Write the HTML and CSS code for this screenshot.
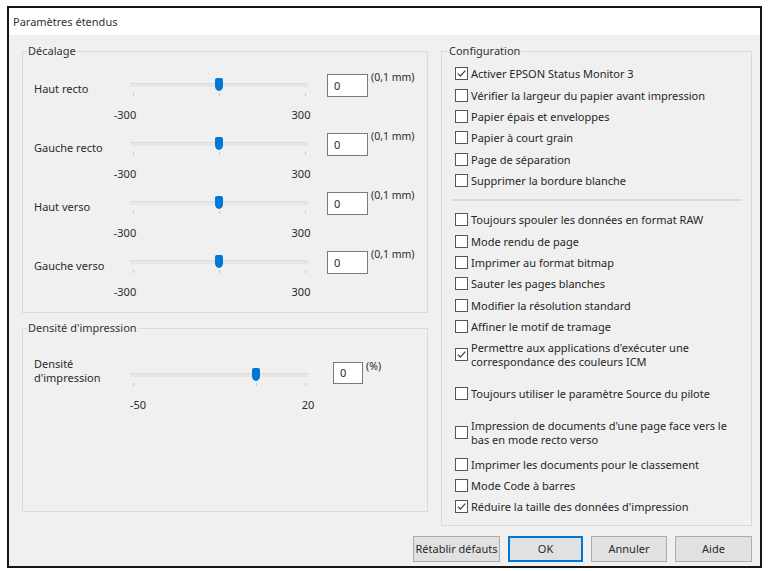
FILE: index.html
```html
<!DOCTYPE html>
<html lang="fr">
<head>
<meta charset="utf-8">
<title>Paramètres étendus</title>
<link rel="stylesheet" href="styles.css">
</head>
<body>
<div class="window">
  <div class="titlebar">Paramètres étendus</div>
  <div class="body">
    <div class="main">
      <div class="col-left">
        <fieldset class="group g-offset">
          <legend>Décalage</legend>
          <div class="rows">
            <div class="row">
              <div class="lbl">Haut recto</div>
              <div class="slider">
                <div class="rail"><span class="tick" style="--p:0"></span><span class="tick" style="--p:0.5"></span><span class="tick" style="--p:1"></span><span class="thumb" style="--p:0.5"></span></div>
                <div class="scale scale-offset"><span>-300</span><span>300</span></div>
              </div>
              <div class="val">0</div>
              <div class="unit">(0,1 mm)</div>
            </div>
            <div class="row">
              <div class="lbl">Gauche recto</div>
              <div class="slider">
                <div class="rail"><span class="tick" style="--p:0"></span><span class="tick" style="--p:0.5"></span><span class="tick" style="--p:1"></span><span class="thumb" style="--p:0.5"></span></div>
                <div class="scale scale-offset"><span>-300</span><span>300</span></div>
              </div>
              <div class="val">0</div>
              <div class="unit">(0,1 mm)</div>
            </div>
            <div class="row">
              <div class="lbl">Haut verso</div>
              <div class="slider">
                <div class="rail"><span class="tick" style="--p:0"></span><span class="tick" style="--p:0.5"></span><span class="tick" style="--p:1"></span><span class="thumb" style="--p:0.5"></span></div>
                <div class="scale scale-offset"><span>-300</span><span>300</span></div>
              </div>
              <div class="val">0</div>
              <div class="unit">(0,1 mm)</div>
            </div>
            <div class="row">
              <div class="lbl">Gauche verso</div>
              <div class="slider">
                <div class="rail"><span class="tick" style="--p:0"></span><span class="tick" style="--p:0.5"></span><span class="tick" style="--p:1"></span><span class="thumb" style="--p:0.5"></span></div>
                <div class="scale scale-offset"><span>-300</span><span>300</span></div>
              </div>
              <div class="val">0</div>
              <div class="unit">(0,1 mm)</div>
            </div>
          </div>
        </fieldset>
        <fieldset class="group g-density">
          <legend>Densité d'impression</legend>
          <div class="row row-density">
            <div class="lbl lbl-two">Densité<br>d'impression</div>
            <div class="slider">
              <div class="rail"><span class="tick" style="--p:0"></span><span class="tick" style="--p:0.7143"></span><span class="tick" style="--p:1"></span><span class="thumb" style="--p:0.7143"></span></div>
              <div class="scale scale-density"><span>-50</span><span>20</span></div>
            </div>
            <div class="val val-small">0</div>
            <div class="unit">(%)</div>
          </div>
        </fieldset>
      </div>
      <fieldset class="group g-config">
        <legend>Configuration</legend>
        <div class="cb on"><span class="box"><svg viewBox="0 0 11 11" width="11" height="11"><path d="M1.8 5.6 L4.3 8.1 L9.3 2.6" /></svg></span><span class="txt">Activer EPSON Status Monitor 3</span></div>
        <div class="cb"><span class="box"></span><span class="txt">Vérifier la largeur du papier avant impression</span></div>
        <div class="cb"><span class="box"></span><span class="txt">Papier épais et enveloppes</span></div>
        <div class="cb"><span class="box"></span><span class="txt">Papier à court grain</span></div>
        <div class="cb"><span class="box"></span><span class="txt">Page de séparation</span></div>
        <div class="cb"><span class="box"></span><span class="txt">Supprimer la bordure blanche</span></div>
        <div class="sep"></div>
        <div class="cb"><span class="box"></span><span class="txt">Toujours spouler les données en format RAW</span></div>
        <div class="cb"><span class="box"></span><span class="txt">Mode rendu de page</span></div>
        <div class="cb"><span class="box"></span><span class="txt">Imprimer au format bitmap</span></div>
        <div class="cb"><span class="box"></span><span class="txt">Sauter les pages blanches</span></div>
        <div class="cb"><span class="box"></span><span class="txt">Modifier la résolution standard</span></div>
        <div class="cb"><span class="box"></span><span class="txt">Affiner le motif de tramage</span></div>
        <div class="cb on multi m-permit"><span class="box"><svg viewBox="0 0 11 11" width="11" height="11"><path d="M1.8 5.6 L4.3 8.1 L9.3 2.6" /></svg></span><span class="txt">Permettre aux applications d'exécuter une<br>correspondance des couleurs ICM</span></div>
        <div class="cb m-source"><span class="box"></span><span class="txt">Toujours utiliser le paramètre Source du pilote</span></div>
        <div class="cb multi m-face"><span class="box"></span><span class="txt">Impression de documents d'une page face vers le<br>bas en mode recto verso</span></div>
        <div class="cb m-sort"><span class="box"></span><span class="txt">Imprimer les documents pour le classement</span></div>
        <div class="cb"><span class="box"></span><span class="txt">Mode Code à barres</span></div>
        <div class="cb on"><span class="box"><svg viewBox="0 0 11 11" width="11" height="11"><path d="M1.8 5.6 L4.3 8.1 L9.3 2.6" /></svg></span><span class="txt">Réduire la taille des données d'impression</span></div>
      </fieldset>
    </div>
    <div class="buttons">
      <button class="btn btn-wide">Rétablir défauts</button>
      <button class="btn btn-ok">OK</button>
      <button class="btn btn-cancel">Annuler</button>
      <button class="btn btn-help">Aide</button>
    </div>
  </div>
</div>
</body>
</html>
```

FILE: styles.css
```css
* { box-sizing: border-box; }

html, body {
  margin: 0;
  padding: 0;
  background: #ffffff;
}

body {
  font-family: "Noto Sans", "Open Sans", sans-serif;
  font-size: 11px;
  color: #2b2b2b;
}

.window {
  margin: 6px 0 0 7px;
  width: 755px;
  height: 562px;
  border: 2px solid #161616;
  background: #f0f0f0;
  display: flex;
  flex-direction: column;
}

.titlebar {
  height: 27px;
  flex: none;
  background: #ffffff;
  display: flex;
  align-items: center;
  padding-left: 4px;
  font-size: 11px;
  color: #333;
}

.body {
  flex: 1;
  display: flex;
  flex-direction: column;
  padding: 9px 8px 0 13px;
}

.main {
  display: flex;
  gap: 13px;
  align-items: flex-start;
}

.col-left {
  width: 406px;
  display: flex;
  flex-direction: column;
  gap: 8px;
}

.group {
  margin: 0;
  border: 1px solid #dadada;
  min-width: 0;
}

.group legend {
  padding: 0 1px;
  margin-left: -7px;
  line-height: 14px;
  height: 14px;
  color: #333;
}

.g-offset {
  padding: 16px 0 13px 11px;
}

.rows {
  display: flex;
  flex-direction: column;
  gap: 11px;
}

.row {
  display: flex;
  align-items: flex-start;
}

.lbl {
  width: 96px;
  flex: none;
  margin-top: 8px;
  line-height: 14px;
}

.lbl-two {
  margin-top: -1px;
  line-height: 14px;
}

.slider {
  width: 178px;
  flex: none;
  margin-top: 4px;
}

.rail {
  position: relative;
  height: 18px;
}

.rail::before {
  content: "";
  position: absolute;
  left: 0;
  right: 0;
  top: 5px;
  height: 3px;
  background: #e6e6e6;
  border-top: 1px solid #dcdcdc;
}

.tick {
  position: absolute;
  top: 15px;
  width: 1px;
  height: 3px;
  background: #c8c8c8;
  left: calc(3px + (100% - 6px) * var(--p));
}

.thumb {
  position: absolute;
  top: 0;
  width: 8px;
  height: 13px;
  margin-left: -4px;
  left: calc(3.5px + (100% - 7px) * var(--p));
  background: #0078d7;
  border-radius: 2px 2px 4px 4px / 2px 2px 5px 5px;
}

.scale {
  display: flex;
  justify-content: space-between;
  margin-top: 12px;
  line-height: 14px;
}

.scale span {
  width: 40px;
  text-align: center;
}

.scale-offset {
  margin-left: -25px;
  margin-right: -13px;
}

.scale-density {
  margin-left: -12px;
  margin-right: -20px;
}

.val {
  width: 41px;
  height: 23px;
  flex: none;
  margin-left: 19px;
  background: #ffffff;
  border: 1px solid #7a7a7a;
  padding-left: 6px;
  line-height: 21px;
}

.val-small {
  width: 30px;
  height: 22px;
  margin-left: 25px;
  margin-top: 4px;
  line-height: 20px;
}

.unit {
  margin-left: 3px;
  line-height: 14px;
  margin-top: -4px;
  font-size: 10.5px;
}

.g-density {
  padding: 23px 0 99px 11px;
}

.row-density .slider {
  margin-top: 10px;
}

.row-density .unit {
  margin-top: 1px;
}

.g-config {
  width: 311px;
  padding: 5px 0 7px 13px;
}

.cb {
  display: flex;
  align-items: center;
  height: 21.4px;
  color: #262626;
}

.box {
  width: 13px;
  height: 13px;
  flex: none;
  border: 1px solid #555;
  background: #ffffff;
  margin-right: 3px;
  display: flex;
  align-items: center;
  justify-content: center;
}

.box svg path {
  fill: none;
  stroke: #404040;
  stroke-width: 1.3;
}

.cb.multi {
  height: auto;
  line-height: 14px;
}

.m-permit { margin-top: 3.3px; }
.m-source { margin-top: 13.8px; }
.m-face { margin-top: 14.8px; }
.m-sort { margin-top: 6.8px; }

.sep {
  height: 2px;
  margin: 7.3px 9px 8.3px -3px;
  background: #dadada;
}

.buttons {
  display: flex;
  justify-content: flex-end;
  gap: 8px;
  margin-top: 10px;
}

.btn {
  height: 26px;
  font-family: inherit;
  font-size: 11px;
  color: #2b2b2b;
  background: #e1e1e1;
  border: 1px solid #adadad;
  padding: 0;
  width: 76px;
}

.btn-wide { width: 87px; }
.btn-ok { width: 75px; border: 2px solid #0078d7; }
.btn-help { width: 77px; }
```
